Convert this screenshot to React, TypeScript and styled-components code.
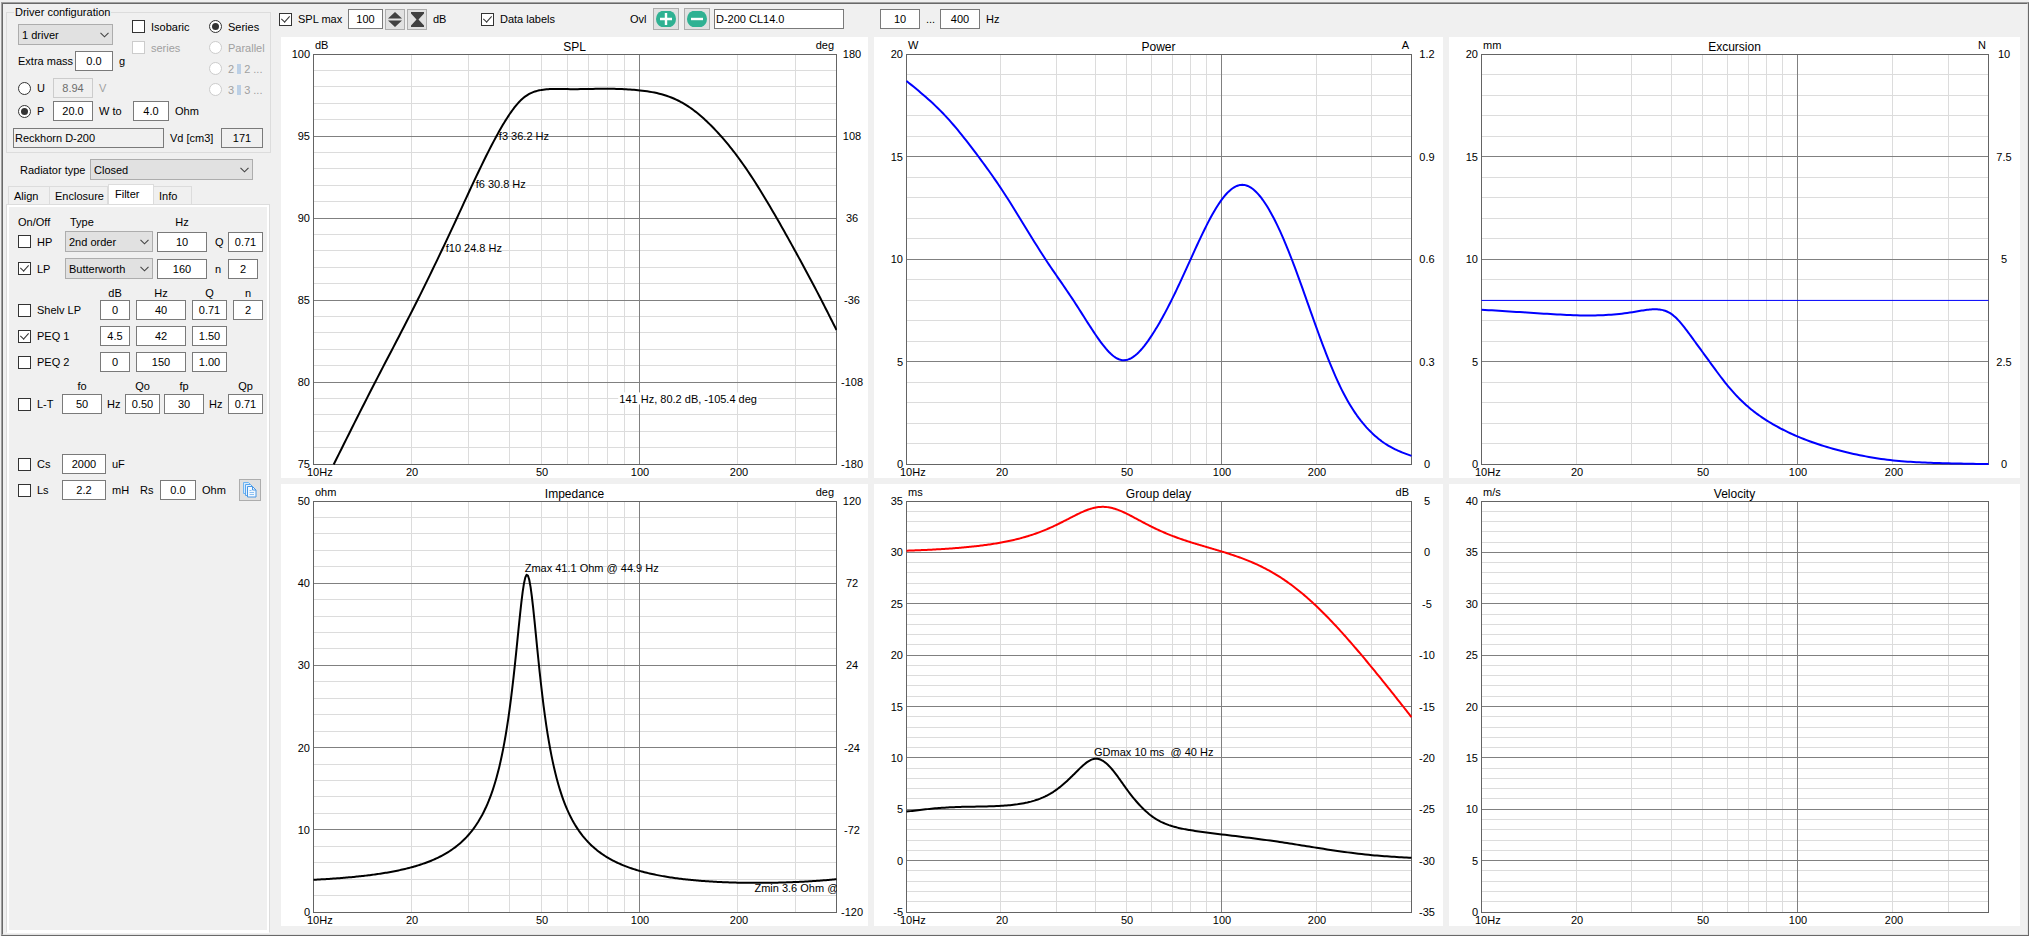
import React, { useId, useLayoutEffect, useRef, useState } from "react";
import styled, { createGlobalStyle, css } from "styled-components";

const GlobalStyle = createGlobalStyle`
  *, *::before, *::after { box-sizing: border-box; }
  body { margin: 0; background: #f0f0f0; }
  body, input, select, button {
    font-family: "Liberation Sans", Arial, sans-serif;
    font-size: 11px;
    line-height: 14px;
    color: #000;
  }
`;

/* ---------- window frame ---------- */

const Page = styled.div`
  height: 100vh;
  min-height: 620px;
  padding: 2px 0 0 1px;
  background: #f0f0f0;
`;

const OuterFrame = styled.div`
  height: 100%;
  border: 1px solid;
  border-color: #a0a0a0 #696969 #696969 #a0a0a0;
`;

const InnerFrame = styled.div`
  display: flex;
  height: 100%;
  border: 1px solid;
  border-color: #696969 #e3e3e3 #e3e3e3 #696969;
`;

const Sidebar = styled.aside`
  display: flex;
  flex-direction: column;
  flex: none;
  width: 268px;
  padding: 1px 0 1px 3px;
`;

const Main = styled.main`
  display: flex;
  flex-direction: column;
  flex: 1;
  min-width: 0;
  padding: 0 7px 8px 8px;
`;

/* ---------- form controls ---------- */

const NumberBox = styled.input<{ $w: number; $left?: boolean }>`
  flex: none;
  width: ${(p) => p.$w}px;
  height: 20px;
  margin: 0;
  padding: 0 1px;
  border: 1px solid #7a7a7a;
  border-radius: 0;
  background: #fff;
  text-align: ${(p) => (p.$left ? "left" : "center")};
  &:read-only { background: #f0f0f0; }
  &:disabled { background: #f0f0f0; border-color: #ccc; color: #6d6d6d; }
`;

const tick = css`
  flex: none;
  appearance: none;
  position: relative;
  width: 13px;
  height: 13px;
  margin: 0;
  border: 1px solid #333;
  background: #fff;
  &:disabled { border-color: #ccc; }
`;

const CheckBox = styled.input.attrs({ type: "checkbox" })`
  ${tick}
  &:checked::after {
    content: "";
    position: absolute;
    left: 3px;
    top: 0;
    width: 5px;
    height: 8px;
    border: solid #333;
    border-width: 0 1px 1px 0;
    transform: rotate(42deg);
  }
`;

const RadioDot = styled.input.attrs({ type: "radio" })`
  ${tick}
  border-radius: 50%;
  &:checked::after {
    content: "";
    position: absolute;
    inset: 2px;
    border-radius: 50%;
    background: #333;
  }
`;

const Choice = styled.label<{ $off?: boolean; $w?: number }>`
  display: flex;
  align-items: center;
  gap: 6px;
  height: 15px;
  width: ${(p) => (p.$w ? p.$w + "px" : "auto")};
  white-space: nowrap;
  color: ${(p) => (p.$off ? "#a0a0a0" : "#000")};
`;

const DropFrame = styled.span<{ $w: number }>`
  position: relative;
  display: block;
  flex: none;
  width: ${(p) => p.$w}px;
  height: 21px;
`;

const DropSelect = styled.select`
  appearance: none;
  width: 100%;
  height: 100%;
  margin: 0;
  padding: 0 14px 0 3px;
  border: 1px solid #adadad;
  border-radius: 0;
  background: #e1e1e1;
`;

const DropArrow = styled.svg`
  position: absolute;
  right: 4px;
  top: 8px;
  pointer-events: none;
`;

const Caption = styled.span<{ $off?: boolean; $w?: number }>`
  flex: none;
  width: ${(p) => (p.$w ? p.$w + "px" : "auto")};
  white-space: nowrap;
  color: ${(p) => (p.$off ? "#a0a0a0" : "#000")};
`;

const IconButton = styled.button<{ $w: number; $h: number }>`
  display: flex;
  align-items: center;
  justify-content: center;
  flex: none;
  width: ${(p) => p.$w}px;
  height: ${(p) => p.$h}px;
  padding: 0;
  border: 1px solid #adadad;
  background: #e1e1e1;
`;

function Drop({ w, label, value }: { w: number; label: string; value: string }) {
  return (
    <DropFrame $w={w}>
      <DropSelect aria-label={label} defaultValue={value}>
        <option>{value}</option>
      </DropSelect>
      <DropArrow width="9" height="6" viewBox="0 0 9 6">
        <path d="M0.5 0.8 L4.5 4.8 L8.5 0.8" fill="none" stroke="#444" strokeWidth="1.1" />
      </DropArrow>
    </DropFrame>
  );
}

function Box({ w, label, value, ...rest }: { w: number; label: string; value: string; disabled?: boolean; readOnly?: boolean; left?: boolean }) {
  const { left, ...flags } = rest;
  return <NumberBox $w={w} $left={left} aria-label={label} defaultValue={value} {...flags} />;
}

function Check({ text, on, off, w }: { text: string; on?: boolean; off?: boolean; w?: number }) {
  return (
    <Choice $off={off} $w={w}>
      <CheckBox defaultChecked={on} disabled={off} />
      {text}
    </Choice>
  );
}

function Radio({ name, text, on, off, children }: { name: string; text?: string; on?: boolean; off?: boolean; children?: React.ReactNode }) {
  return (
    <Choice $off={off}>
      <RadioDot name={name} defaultChecked={on} disabled={off} />
      {text ?? children}
    </Choice>
  );
}

/* ---------- driver configuration ---------- */

const Group = styled.fieldset`
  display: block;
  min-width: 0;
  margin: 0;
  padding: 0 6px 4px;
  border: 1px solid #dcdcdc;
`;

const GroupTitle = styled.legend`
  margin-left: 1px;
  padding: 0 1px;
  line-height: 14px;
`;

const GroupTop = styled.div`
  display: flex;
  padding-left: 5px;
`;

const Basics = styled.div`
  flex: none;
  width: 114px;
  padding-top: 5px;
`;

const ChoiceColumn = styled.div<{ $w: number }>`
  display: flex;
  flex-direction: column;
  flex: none;
  gap: 6px;
  width: ${(p) => p.$w}px;
`;

const Line = styled.div<{ $top: number; $indent?: number }>`
  display: flex;
  align-items: center;
  height: 20px;
  margin-top: ${(p) => p.$top}px;
  padding-left: ${(p) => p.$indent ?? 0}px;
`;

const ChoiceCell = styled.div<{ $w: number }>`
  flex: none;
  width: ${(p) => p.$w}px;
`;

const Unit = styled(Caption)`
  padding-left: 6px;
`;

const Bars = styled.span`
  display: inline-block;
  width: 4px;
  height: 10px;
  margin: 0 3px;
  background: #bcd0e6;
  vertical-align: -1px;
`;

const RadiatorLine = styled.div`
  display: flex;
  align-items: center;
  height: 21px;
  margin-top: 6px;
  padding-left: 14px;
`;

function DriverConfiguration() {
  return (
    <Group>
      <GroupTitle>Driver configuration</GroupTitle>
      <GroupTop>
        <Basics>
          <Drop w={95} label="Driver count" value="1 driver" />
          <Line $top={6}>
            <Caption $w={57}>Extra mass</Caption>
            <Box w={38} label="Extra mass" value="0.0" />
            <Unit>g</Unit>
          </Line>
          <Line $top={7}>
            <ChoiceCell $w={35}>
              <Radio name="drive" text="U" />
            </ChoiceCell>
            <Box w={40} label="Voltage" value="8.94" disabled />
            <Unit $off>V</Unit>
          </Line>
        </Basics>
        <ChoiceColumn $w={77}>
          <Check text="Isobaric" />
          <Check text="series" off />
        </ChoiceColumn>
        <ChoiceColumn $w={54}>
          <Radio name="wiring" text="Series" on />
          <Radio name="wiring" text="Parallel" off />
          <Radio name="wiring" off>
            <span>2<Bars />2 ...</span>
          </Radio>
          <Radio name="wiring" off>
            <span>3<Bars />3 ...</span>
          </Radio>
        </ChoiceColumn>
      </GroupTop>
      <Line $top={3} $indent={5}>
        <ChoiceCell $w={35}>
          <Radio name="drive" text="P" on />
        </ChoiceCell>
        <Box w={40} label="Power" value="20.0" />
        <Unit $w={40}>W to</Unit>
        <Box w={36} label="Load" value="4.0" />
        <Unit>Ohm</Unit>
      </Line>
      <Line $top={7}>
        <Box w={151} label="Driver name" value="Reckhorn D-200" readOnly left />
        <Unit $w={57}>Vd [cm3]</Unit>
        <Box w={42} label="Vd" value="171" readOnly />
      </Line>
    </Group>
  );
}

/* ---------- tabs and filter pane ---------- */

const TabBar = styled.div`
  display: flex;
  align-items: flex-end;
  height: 20px;
  margin-top: 4px;
  padding-left: 2px;
`;

const Tab = styled.button<{ $w: number; $active?: boolean }>`
  width: ${(p) => p.$w}px;
  height: ${(p) => (p.$active ? 20 : 18)}px;
  padding: ${(p) => (p.$active ? "0 0 1px 6px" : "0 0 0 5px")};
  border: 1px solid #dcdcdc;
  border-width: 1px 1px 0 ${(p) => (p.$active ? 1 : 0)}px;
  background: ${(p) => (p.$active ? "#fff" : "#f0f0f0")};
  text-align: left;
  white-space: nowrap;
  &:first-child { border-left-width: 1px; }
`;

const Pane = styled.section`
  flex: 1;
  width: 264px;
  padding: 8px 5px 0 11px;
  border: 1px solid #dcdcdc;
  border-bottom-color: #fff;
  box-shadow: inset 0 0 0 2px #fff;
`;

const Rows = styled.div<{ $cols: string; $top: number; $rowHeight: number }>`
  display: grid;
  grid-template-columns: ${(p) => p.$cols};
  grid-auto-rows: ${(p) => p.$rowHeight}px;
  align-items: center;
  row-gap: 6px;
  margin-top: ${(p) => p.$top}px;
`;

const Heads = styled.div<{ $cols: string; $top: number }>`
  display: grid;
  grid-template-columns: ${(p) => p.$cols};
  height: 14px;
  margin-top: ${(p) => p.$top}px;
`;

const Head = styled.span<{ $w: number }>`
  width: ${(p) => p.$w}px;
  text-align: center;
  white-space: nowrap;
`;

const StartHead = styled.span<{ $indent: number }>`
  padding-left: ${(p) => p.$indent}px;
  white-space: nowrap;
`;

const PAIR = "47px 92px 58px 13px 35px";
const SHELF = "82px 36px 56px 41px 30px";
const LINKWITZ = "44px 45px 18px 39px 45px 19px 35px";
const PASSIVE = "44px 50px 28px 20px 42px 37px 22px";

function FilterPane() {
  return (
    <Pane role="tabpanel" aria-label="Filter">
      <Heads $cols={PAIR} $top={2}>
        <StartHead $indent={0}>On/Off</StartHead>
        <StartHead $indent={5}>Type</StartHead>
        <Head $w={50}>Hz</Head>
      </Heads>
      <Rows $cols={PAIR} $top={2} $rowHeight={21}>
        <Check text="HP" />
        <Drop w={88} label="High pass type" value="2nd order" />
        <Box w={50} label="High pass frequency" value="10" />
        <Caption>Q</Caption>
        <Box w={35} label="High pass Q" value="0.71" />
        <Check text="LP" on />
        <Drop w={88} label="Low pass type" value="Butterworth" />
        <Box w={50} label="Low pass frequency" value="160" />
        <Caption>n</Caption>
        <Box w={30} label="Low pass order" value="2" />
      </Rows>
      <Heads $cols={SHELF} $top={7}>
        <span />
        <Head $w={30}>dB</Head>
        <Head $w={50}>Hz</Head>
        <Head $w={35}>Q</Head>
        <Head $w={30}>n</Head>
      </Heads>
      <Rows $cols={SHELF} $top={0} $rowHeight={20}>
        <Check text="Shelv LP" />
        <Box w={30} label="Shelf gain" value="0" />
        <Box w={50} label="Shelf frequency" value="40" />
        <Box w={35} label="Shelf Q" value="0.71" />
        <Box w={30} label="Shelf order" value="2" />
        <Check text="PEQ 1" on />
        <Box w={30} label="PEQ 1 gain" value="4.5" />
        <Box w={50} label="PEQ 1 frequency" value="42" />
        <Box w={35} label="PEQ 1 Q" value="1.50" />
        <span />
        <Check text="PEQ 2" />
        <Box w={30} label="PEQ 2 gain" value="0" />
        <Box w={50} label="PEQ 2 frequency" value="150" />
        <Box w={35} label="PEQ 2 Q" value="1.00" />
        <span />
      </Rows>
      <Heads $cols={LINKWITZ} $top={7}>
        <span />
        <Head $w={40}>fo</Head>
        <span />
        <Head $w={35}>Qo</Head>
        <Head $w={40}>fp</Head>
        <span />
        <Head $w={35}>Qp</Head>
      </Heads>
      <Rows $cols={LINKWITZ} $top={1} $rowHeight={20}>
        <Check text="L-T" />
        <Box w={40} label="fo" value="50" />
        <Caption>Hz</Caption>
        <Box w={35} label="Qo" value="0.50" />
        <Box w={40} label="fp" value="30" />
        <Caption>Hz</Caption>
        <Box w={35} label="Qp" value="0.71" />
      </Rows>
      <Rows $cols={PASSIVE} $top={40} $rowHeight={20}>
        <Check text="Cs" />
        <Box w={44} label="Cs" value="2000" />
        <Caption>uF</Caption>
        <span />
        <span />
        <span />
        <span />
        <Check text="Ls" />
        <Box w={44} label="Ls" value="2.2" />
        <Caption>mH</Caption>
        <Caption>Rs</Caption>
        <Box w={36} label="Rs" value="0.0" />
        <Caption>Ohm</Caption>
        <IconButton $w={22} $h={22} aria-label="Copy">
          <svg width="14" height="16" viewBox="0 0 14 16">
            <path d="M0.500 0.500h5l2 2v9h-7z" fill="#d6eafc" stroke="#6fb4f2" />
            <path d="M2.500 2.500h5l2 2v9h-7z" fill="#e4f2ff" stroke="#5aa6ee" />
            <path d="M4.500 4.500h5l3.500 3.500v7h-8.500z" fill="#f2f9ff" stroke="#4a97e4" />
            <path d="M9.500 4.500v3.500h3.500" fill="none" stroke="#4a97e4" />
            <path d="M6.500 8.500h2M6.500 10.500h4.500M6.500 12.500h4.500" stroke="#8cc0f2" />
          </svg>
        </IconButton>
      </Rows>
    </Pane>
  );
}

/* ---------- toolbar ---------- */

const Toolbar = styled.div`
  display: flex;
  align-items: center;
  flex: none;
  height: 30px;
`;

const ToolGroup = styled.div<{ $w: number }>`
  display: flex;
  align-items: center;
  flex: none;
  width: ${(p) => p.$w}px;
`;

const Gap = styled.span<{ $w: number }>`
  flex: none;
  width: ${(p) => p.$w}px;
`;

function OverlayIcon({ plus }: { plus?: boolean }) {
  return (
    <svg width="20" height="16" viewBox="0 0 20 16">
      <path d="M5.500 0h9a9 9 0 0 1 5.500 8a9 9 0 0 1-5.500 8h-9a9 9 0 0 1-5.500-8a9 9 0 0 1 5.500-8z" fill="#2fb192" />
      <path d={plus ? "M4 8h12M10 2v12" : "M4 8h12"} stroke="#fff" strokeWidth="2.400" />
    </svg>
  );
}

function ChartToolbar() {
  return (
    <Toolbar>
      <ToolGroup $w={202}>
        <Check text="SPL max" on w={69} />
        <Box w={35} label="SPL max" value="100" />
        <Gap $w={2} />
        <IconButton $w={20} $h={21} aria-label="Move scale">
          <svg width="14" height="15" viewBox="0 0 14 15">
            <path d="M7 0L14 6.500H0zM7 15L0 8.500H14z" fill="#404040" />
          </svg>
        </IconButton>
        <Gap $w={2} />
        <IconButton $w={20} $h={21} aria-label="Compress scale">
          <svg width="13" height="15" viewBox="0 0 13 15">
            <path d="M0 0H13V1.500L7.500 7.500L13 13.500V15H0V13.500L5.500 7.500L0 1.500z" fill="#404040" />
          </svg>
        </IconButton>
        <Unit>dB</Unit>
      </ToolGroup>
      <ToolGroup $w={149}>
        <Check text="Data labels" on />
      </ToolGroup>
      <ToolGroup $w={250}>
        <Caption $w={23}>Ovl</Caption>
        <IconButton $w={26} $h={22} aria-label="Add overlay">
          <OverlayIcon plus />
        </IconButton>
        <Gap $w={5} />
        <IconButton $w={26} $h={22} aria-label="Remove overlay">
          <OverlayIcon />
        </IconButton>
        <Gap $w={4} />
        <Box w={130} label="Overlay name" value="D-200 CL14.0" left />
      </ToolGroup>
      <Box w={40} label="Lowest frequency" value="10" />
      <Unit $w={20}>...</Unit>
      <Box w={40} label="Highest frequency" value="400" />
      <Unit>Hz</Unit>
    </Toolbar>
  );
}

/* ---------- charts ---------- */

type Point = [number, number];
type Curve = { color: string; min: number; max: number; width?: number; data: Point[] };
type Note = { text: string; f: number; value: number; dy: number; boxed?: boolean };
type ChartSpec = {
  title: string;
  leftUnit: string;
  rightUnit?: string;
  left: string[];
  right?: string[];
  curves: Curve[];
  notes?: Note[];
  range: [number, number];
};

const F_MIN = 10;
const F_MAX = 400;
const position = (f: number) => Math.log(f / F_MIN) / Math.log(F_MAX / F_MIN);

/* Natural cubic spline on a logarithmic frequency axis */
function smooth(points: Point[], steps = 16): Point[] {
  const x = points.map((p) => Math.log(p[0]));
  const y = points.map((p) => p[1]);
  const n = points.length;
  const second = new Array(n).fill(0);
  const work = new Array(n).fill(0);
  for (let i = 1; i < n - 1; i++) {
    const sig = (x[i] - x[i - 1]) / (x[i + 1] - x[i - 1]);
    const p = sig * second[i - 1] + 2;
    second[i] = (sig - 1) / p;
    const bend = (y[i + 1] - y[i]) / (x[i + 1] - x[i]) - (y[i] - y[i - 1]) / (x[i] - x[i - 1]);
    work[i] = ((6 * bend) / (x[i + 1] - x[i - 1]) - sig * work[i - 1]) / p;
  }
  second[n - 1] = 0;
  for (let i = n - 2; i >= 0; i--) second[i] = second[i] * second[i + 1] + work[i];
  const out: Point[] = [];
  for (let i = 0; i < n - 1; i++) {
    const h = x[i + 1] - x[i];
    for (let s = 0; s <= steps; s++) {
      const b = s / steps;
      const a = 1 - b;
      const v = a * y[i] + b * y[i + 1] + (((a * a * a - a) * second[i] + (b * b * b - b) * second[i + 1]) * h * h) / 6;
      out.push([Math.exp(x[i] + b * h), v]);
    }
  }
  return out;
}

function sweep(fn: (f: number) => number, count = 400): Point[] {
  return Array.from({ length: count + 1 }, (_, i) => {
    const f = F_MIN * Math.pow(F_MAX / F_MIN, i / count);
    return [f, fn(f)] as Point;
  });
}

/* Butterworth low pass at 160 Hz plus a 4.5 dB peak at 42 Hz */
const filterGain = (f: number) => {
  const low = -10 * Math.log10(1 + Math.pow(f / 160, 4));
  const x = f / 42 - 42 / f;
  const a = Math.pow(10, 4.5 / 20);
  const peak = 10 * Math.log10((x * x + (a * a) / 2.25) / (x * x + 1 / 2.25));
  return low + peak;
};

/* Voice coil in series with the mechanical resonance of the closed box */
const impedance = (f: number) => {
  const x = 5.5 * (f / 45.1 - 45.1 / f);
  const res = 37.55 / (1 + x * x);
  const re = 3.55 + res;
  const im = -res * x + 2 * Math.PI * f * 0.00107;
  return Math.hypot(re, im);
};

const charts: ChartSpec[] = [
  {
    title: "SPL",
    leftUnit: "dB",
    rightUnit: "deg",
    range: [75, 100],
    left: ["75", "80", "85", "90", "95", "100"],
    right: ["-180", "-108", "-36", "36", "108", "180"],
    curves: [
      {
        color: "#000", min: 75, max: 100,
        data: smooth([
          [11.53, 75], [15.43, 80], [20.8, 85], [27.46, 90], [36.3, 95], [40, 96.4], [44, 97.36],
          [50, 97.84], [60, 97.89], [80, 97.91], [100, 97.81], [131.3, 97.18],
          [150.5, 96.4], [177.5, 95], [200, 93.72], [262.8, 90], [309.8, 87.45], [360.3, 84.99], [400, 83.2],
        ]),
      },
    ],
    notes: [
      { text: "f3 36.2 Hz", f: 37.1, value: 95, dy: 4 },
      { text: "f6 30.8 Hz", f: 31.5, value: 91.9, dy: 1 },
      { text: "f10 24.8 Hz", f: 25.5, value: 88, dy: 1 },
      { text: "141 Hz, 80.2 dB, -105.4 deg", f: 141, value: 79, dy: 5, boxed: true },
    ],
  },
  {
    title: "Power",
    leftUnit: "W",
    rightUnit: "A",
    range: [0, 20],
    left: ["0", "5", "10", "15", "20"],
    right: ["0", "0.3", "0.6", "0.9", "1.2"],
    curves: [
      {
        color: "#00f", min: 0, max: 20,
        data: smooth([
          [10, 18.71], [13.26, 17.02], [16.95, 15], [20, 13.44], [27.63, 10], [34, 7.96], [40, 6.28],
          [48.3, 5.09], [60, 6.3], [70, 8.15], [80, 10.07], [100, 12.92],
          [117.4, 13.64], [137.6, 12.72], [166.9, 10], [200, 6.65],
          [240.6, 3.63], [300, 1.53], [341, 0.88], [400, 0.42],
        ]),
      },
    ],
  },
  {
    title: "Excursion",
    leftUnit: "mm",
    rightUnit: "N",
    range: [0, 20],
    left: ["0", "5", "10", "15", "20"],
    right: ["0", "2.5", "5", "7.5", "10"],
    curves: [
      { color: "#00f", min: 0, max: 20, width: 1, data: [[10, 7.98], [400, 7.98]] },
      {
        color: "#00f", min: 0, max: 20,
        data: smooth([
          [10, 7.55], [15, 7.38], [22, 7.27], [30, 7.43], [35, 7.57], [40, 7.32],
          [46.2, 6.2], [52.65, 5], [60, 3.84], [70, 2.78], [80, 2.13], [100, 1.36],
          [140.3, 0.62], [200, 0.2], [280, 0.07], [400, 0.02],
        ]),
      },
    ],
  },
  {
    title: "Impedance",
    leftUnit: "ohm",
    rightUnit: "deg",
    range: [0, 50],
    left: ["0", "10", "20", "30", "40", "50"],
    right: ["-120", "-72", "-24", "24", "72", "120"],
    curves: [{ color: "#000", min: 0, max: 50, data: sweep(impedance) }],
    notes: [
      { text: "Zmax 41.1 Ohm @ 44.9 Hz", f: 44.5, value: 41.1, dy: -2 },
      { text: "Zmin 3.6 Ohm @", f: 225, value: 3.6, dy: 10 },
    ],
  },
  {
    title: "Group delay",
    leftUnit: "ms",
    rightUnit: "dB",
    range: [-5, 35],
    left: ["-5", "0", "5", "10", "15", "20", "25", "30", "35"],
    right: ["-35", "-30", "-25", "-20", "-15", "-10", "-5", "0", "5"],
    curves: [
      {
        color: "#000", min: -5, max: 35,
        data: smooth([
          [10, 4.82], [12.5, 5.15], [15, 5.28], [20, 5.38], [24.5, 5.75], [30, 6.98], [34.36, 8.6],
          [39.95, 9.97], [45.7, 8.64], [50, 6.98], [60, 4.38],
          [70, 3.38], [80, 3], [100, 2.6], [150, 1.9], [200, 1.3], [300, 0.58], [400, 0.32],
        ]),
      },
      { color: "#f00", min: -35, max: 5, data: sweep(filterGain) },
    ],
    notes: [{ text: "GDmax 10 ms\u00a0 @ 40 Hz", f: 39.5, value: 10, dy: -2 }],
  },
  {
    title: "Velocity",
    leftUnit: "m/s",
    range: [0, 40],
    left: ["0", "5", "10", "15", "20", "25", "30", "35", "40"],
    curves: [],
  },
];

const ChartGrid = styled.div`
  display: grid;
  grid-template-columns: minmax(0, 587fr) minmax(0, 569fr) minmax(0, 571fr);
  grid-template-rows: minmax(0, 441fr) minmax(0, 442fr);
  gap: 6px;
  flex: 1;
  min-height: 0;
  margin: 3px 0 0 2px;
`;

const ChartPanel = styled.figure`
  margin: 0;
  overflow: hidden;
  background: #fff;
`;

const Drawing = styled.svg`
  display: block;
  font-size: 11px;
`;

const Title = styled.text`
  font-size: 12px;
`;

function Chart({ spec }: { spec: ChartSpec }) {
  const panel = useRef<HTMLElement>(null);
  const clip = useId();
  const [size, setSize] = useState({ w: 570, h: 441 });

  useLayoutEffect(() => {
    const node = panel.current;
    if (!node) return;
    const measure = () => setSize({ w: node.clientWidth, h: node.clientHeight });
    measure();
    const observer = new ResizeObserver(measure);
    observer.observe(node);
    return () => observer.disconnect();
  }, []);

  const x0 = 32;
  const y0 = 17;
  const w = Math.max(size.w - 64, 10);
  const h = Math.max(size.h - 31, 10);
  const px = (f: number) => x0 + position(f) * w;
  const py = (v: number, min: number, max: number) => y0 + h - ((v - min) / (max - min)) * h;
  const snap = (v: number) => Math.floor(v) + 0.5;
  const majors = spec.left.length - 1;
  const minors = majors * 5;
  const [lo, hi] = spec.range;

  return (
    <ChartPanel ref={panel}>
      <Drawing width={size.w} height={size.h} role="img" aria-label={spec.title}>
        <clipPath id={clip}>
          <rect x={x0} y={y0} width={w + 1} height={h + 1} />
        </clipPath>
        {Array.from({ length: minors + 1 }, (_, i) => (
          <line key={i} x1={x0} x2={x0 + w} y1={snap(y0 + (i * h) / minors)} y2={snap(y0 + (i * h) / minors)} stroke="#dcdcdc" />
        ))}
        {[20, 30, 40, 50, 60, 70, 80, 90, 200, 300].map((f) => (
          <line key={f} x1={snap(px(f))} x2={snap(px(f))} y1={y0} y2={y0 + h} stroke="#dcdcdc" />
        ))}
        {spec.left.map((_, i) => (
          <line key={i} x1={x0} x2={x0 + w} y1={snap(y0 + (i * h) / majors)} y2={snap(y0 + (i * h) / majors)} stroke="#808080" />
        ))}
        <line x1={snap(px(100))} x2={snap(px(100))} y1={y0} y2={y0 + h} stroke="#808080" />
        <rect x={x0 + 0.5} y={y0 + 0.5} width={w} height={h} fill="none" stroke="#646464" />
        <g clipPath={`url(#${clip})`}>
          {spec.curves.map((c, i) => (
            <polyline
              key={i}
              fill="none"
              stroke={c.color}
              strokeWidth={c.width ?? 2}
              strokeLinejoin="round"
              points={c.data
                .map(([f, v]) => `${(px(f) + 0.5).toFixed(2)},${(py(v, c.min, c.max) + (c.width ? 0 : 0.5)).toFixed(2)}`)
                .join(" ")}
            />
          ))}
          {spec.notes?.map((n) => {
            const x = px(n.f);
            const y = py(n.value, lo, hi);
            return (
              <g key={n.text}>
                {n.boxed && <rect x={x - 70} y={y - 6} width={140} height={12} fill="#fff" />}
                <text x={x} y={y + n.dy} textAnchor={n.boxed ? "middle" : "start"}>{n.text}</text>
              </g>
            );
          })}
        </g>
        <text x={x0 + 2} y={12}>{spec.leftUnit}</text>
        <Title x={x0 + w / 2} y={14} textAnchor="middle">{spec.title}</Title>
        {spec.rightUnit && <text x={x0 + w - 2} y={12} textAnchor="end">{spec.rightUnit}</text>}
        {spec.left.map((t, i) => (
          <text key={t} x={x0 - 3} y={Math.round(y0 + h - (i * h) / majors) + 4} textAnchor="end">{t}</text>
        ))}
        {spec.right?.map((t, i) => (
          <text key={t} x={x0 + w + 16} y={Math.round(y0 + h - (i * h) / majors) + 4} textAnchor="middle">{t}</text>
        ))}
        <text x={x0 - 6} y={y0 + h + 12}>10Hz</text>
        {[20, 50, 100, 200].map((f) => (
          <text key={f} x={Math.round(px(f)) + 1} y={y0 + h + 12} textAnchor="middle">{f}</text>
        ))}
      </Drawing>
    </ChartPanel>
  );
}

/* ---------- application ---------- */

export default function App() {
  return (
    <>
      <GlobalStyle />
      <Page>
        <OuterFrame>
          <InnerFrame>
            <Sidebar>
              <DriverConfiguration />
              <RadiatorLine>
                <Caption $w={70}>Radiator type</Caption>
                <Drop w={163} label="Radiator type" value="Closed" />
              </RadiatorLine>
              <TabBar role="tablist">
                <Tab role="tab" $w={42}>Align</Tab>
                <Tab role="tab" $w={58}>Enclosure</Tab>
                <Tab role="tab" $w={46} $active aria-selected>Filter</Tab>
                <Tab role="tab" $w={38}>Info</Tab>
              </TabBar>
              <FilterPane />
            </Sidebar>
            <Main>
              <ChartToolbar />
              <ChartGrid>
                {charts.map((spec) => (
                  <Chart key={spec.title} spec={spec} />
                ))}
              </ChartGrid>
            </Main>
          </InnerFrame>
        </OuterFrame>
      </Page>
    </>
  );
}
